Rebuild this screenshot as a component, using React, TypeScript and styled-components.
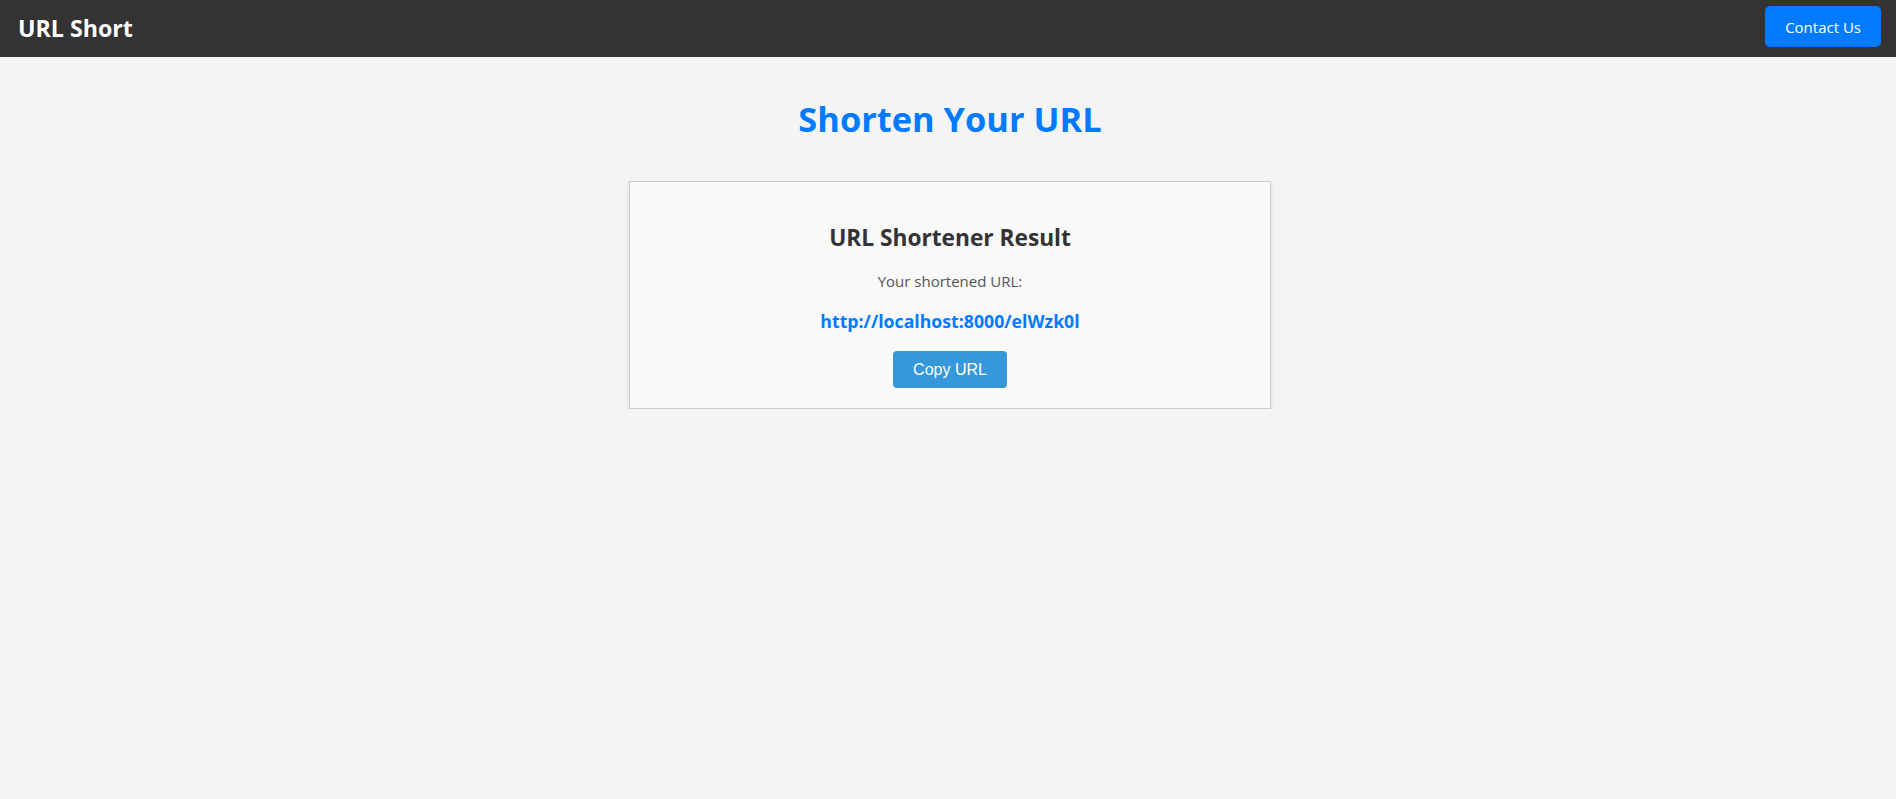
import React from "react";
import styled, { createGlobalStyle } from "styled-components";

const GlobalStyle = createGlobalStyle`
  html, body {
    margin: 0;
    padding: 0;
    background: #f4f4f4;
    font-family: "Segoe UI", "Open Sans", "Noto Sans", sans-serif;
  }
  * { box-sizing: border-box; }
`;

const Header = styled.header`
  display: flex;
  justify-content: space-between;
  align-items: center;
  height: 57px;
  padding: 0 15px 0 18px;
  background: #333333;
  color: #ffffff;
`;

const Logo = styled.div`
  margin-bottom: 2px;
  font-size: 23.2px;
  font-weight: 700;
  line-height: 30px;
`;

const ContactButton = styled.button`
  height: 41px;
  margin-bottom: 4px;
  padding: 0 20px;
  border: none;
  border-radius: 5px;
  background: #007bff;
  color: #ffffff;
  font-family: inherit;
  font-size: 15px;
  cursor: pointer;
`;

const Main = styled.main`
  display: flex;
  flex-direction: column;
  align-items: center;
  padding-left: 4px;
`;

const PageTitle = styled.h1`
  margin: 37px 0 37px;
  font-size: 34.4px;
  line-height: 50px;
  font-weight: 700;
  color: #007bff;
`;

const Card = styled.section`
  width: 642px;
  padding: 20px;
  border: 1px solid #cccccc;
  background: #f9f9f9;
  box-shadow: 0 2px 5px rgba(0, 0, 0, 0.1);
  text-align: center;
  display: flex;
  flex-direction: column;
  align-items: center;
`;

const CardTitle = styled.h2`
  margin: 23px 0 20px;
  font-size: 22.7px;
  line-height: 26px;
  font-weight: 700;
  color: #333333;
`;

const Label = styled.p`
  margin: 0 0 18px;
  font-size: 15px;
  line-height: 20px;
  color: #555555;
`;

const ShortLink = styled.a`
  display: block;
  margin-bottom: 18px;
  font-size: 17.7px;
  line-height: 24px;
  font-weight: 700;
  color: #007bff;
  text-decoration: none;
`;

const CopyButton = styled.button`
  height: 37px;
  padding: 0 20px;
  border: none;
  border-radius: 4px;
  background: #3498db;
  color: #ffffff;
  font-family: "Liberation Sans", Arial, sans-serif;
  font-size: 16px;
  cursor: pointer;
`;

export default function App() {
  const url = "http://localhost:8000/elWzk0l";
  return (
    <>
      <GlobalStyle />
      <Header>
        <Logo>URL Short</Logo>
        <ContactButton>Contact Us</ContactButton>
      </Header>
      <Main>
        <PageTitle>Shorten Your URL</PageTitle>
        <Card>
          <CardTitle>URL Shortener Result</CardTitle>
          <Label>Your shortened URL:</Label>
          <ShortLink href={url}>{url}</ShortLink>
          <CopyButton onClick={() => navigator.clipboard?.writeText(url)}>Copy URL</CopyButton>
        </Card>
      </Main>
    </>
  );
}
